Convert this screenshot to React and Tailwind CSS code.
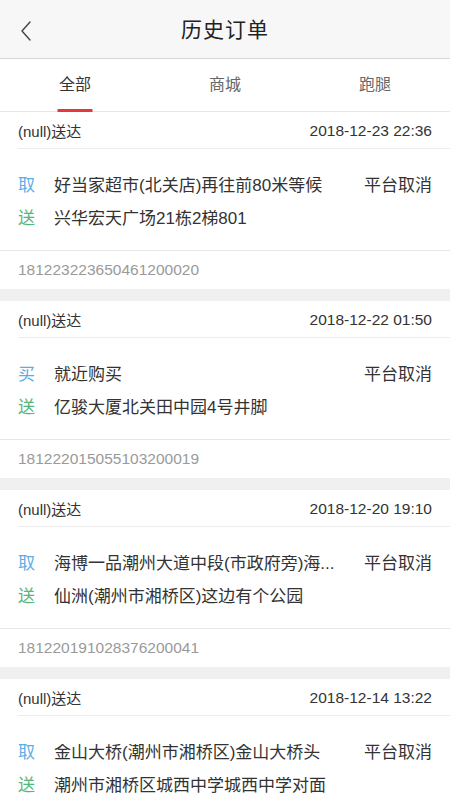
import { useState } from "react";

const orders = [
  {
    date: "2018-12-23 22:36",
    type: "取",
    from: "好当家超市(北关店)再往前80米等候",
    to: "兴华宏天广场21栋2梯801",
    status: "平台取消",
    no: "181223223650461200020",
  },
  {
    date: "2018-12-22 01:50",
    type: "买",
    from: "就近购买",
    to: "亿骏大厦北关田中园4号井脚",
    status: "平台取消",
    no: "181222015055103200019",
  },
  {
    date: "2018-12-20 19:10",
    type: "取",
    from: "海博一品潮州大道中段(市政府旁)海...",
    to: "仙洲(潮州市湘桥区)这边有个公园",
    status: "平台取消",
    no: "181220191028376200041",
  },
  {
    date: "2018-12-14 13:22",
    type: "取",
    from: "金山大桥(潮州市湘桥区)金山大桥头",
    to: "潮州市湘桥区城西中学城西中学对面",
    status: "平台取消",
    no: "181214132255103200012",
  },
];

const tabs = ["全部", "商城", "跑腿"];

const OrderCard = ({ order }) => {
  return (
    <div className="bg-white">
      <div className="h-[37px] pt-[2px] ml-[18px] pr-[18px] flex items-center justify-between border-b border-[#ececec] text-[15px] text-[#333]">
        <span>(null)送达</span>
        <span className="text-[15.5px]">{order.date}</span>
      </div>
      <div className="pt-[20px] pb-[15px] px-[18px] border-b border-[#e6e6e6]">
        <div className="h-[33px] flex items-center text-[17px]">
          <span className="w-[36px] shrink-0 text-[#5aaee6]">{order.type}</span>
          <span className="flex-1 min-w-0 truncate text-[#333] mr-[16px]">
            {order.from}
          </span>
          <span className="shrink-0 text-[#333]">{order.status}</span>
        </div>
        <div className="h-[33px] flex items-center text-[17px]">
          <span className="w-[36px] shrink-0 text-[#58b57c]">送</span>
          <span className="flex-1 min-w-0 truncate text-[#333]">{order.to}</span>
        </div>
      </div>
      <div className="h-[38px] px-[18px] flex items-center text-[15.5px] text-[#9a9a9a]">
        {order.no}
      </div>
      <div className="h-[12px] bg-[#f0f0f0]"></div>
    </div>
  );
};

export default function App() {
  const [active, setActive] = useState(0);

  return (
    <div
      className="w-full min-h-screen bg-[#f0f0f0] leading-none"
      style={{ fontFamily: '"Liberation Sans", "Noto Sans CJK SC", sans-serif' }}
    >
      {/* header */}
      <div className="relative h-[59px] bg-[#f7f7f7] border-b border-[#d6d6d6] flex items-center justify-center">
        <button className="absolute left-[14px] top-[18px] w-[24px] h-[26px] flex items-center justify-center">
          <svg width="14" height="22" viewBox="0 0 14 22" fill="none">
            <polyline
              points="11,2 3,11 11,20"
              stroke="#444"
              strokeWidth="1.4"
              strokeLinecap="round"
              strokeLinejoin="round"
            />
          </svg>
        </button>
        <h1 className="text-[21px] text-[#222] tracking-[1px]">历史订单</h1>
      </div>

      {/* tabs */}
      <div className="h-[53px] bg-white border-b border-[#e6e6e6] flex">
        {tabs.map((t, i) => (
          <button
            key={t}
            onClick={() => setActive(i)}
            className={`relative flex-1 flex items-center justify-center text-[16px] ${
              active === i ? "text-[#333]" : "text-[#666]"
            }`}
          >
            {t}
            {active === i && (
              <span className="absolute bottom-[-1px] left-1/2 -translate-x-1/2 w-[35px] h-[3px] bg-[#e4393c]"></span>
            )}
          </button>
        ))}
      </div>

      {orders.map((o) => (
        <OrderCard key={o.no} order={o} />
      ))}
    </div>
  );
}
